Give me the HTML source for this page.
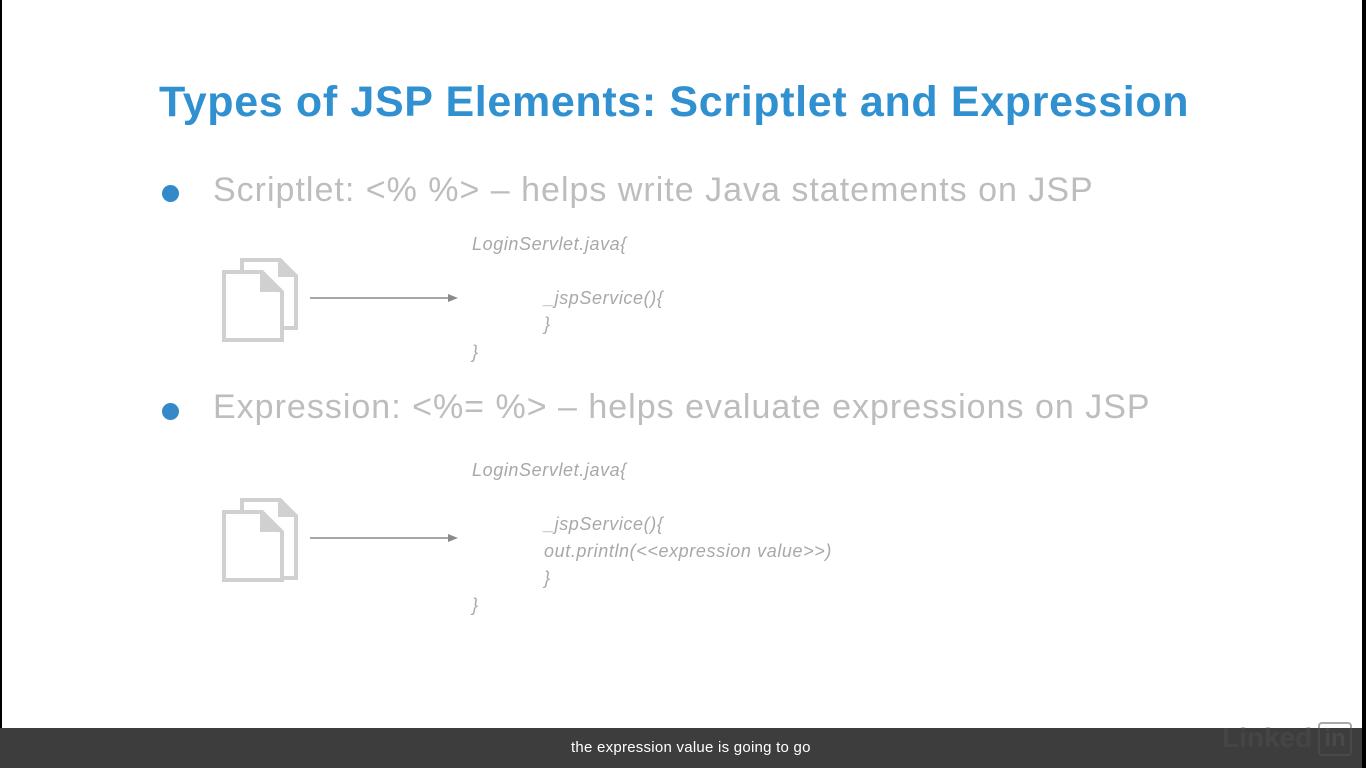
<!DOCTYPE html>
<html><head><meta charset="utf-8"><style>
*{margin:0;padding:0}
body{width:1366px;height:768px;background:#000;position:relative;overflow:hidden;font-family:"Liberation Sans",sans-serif}
#s{position:absolute;left:2px;top:0;width:1360px;height:768px;background:#fff}
.t{position:absolute;left:159px;top:78px;font-size:43px;font-weight:bold;color:#3191d0;white-space:nowrap;letter-spacing:0.65px}
.b{position:absolute;font-size:34px;color:#bdbdbd;white-space:nowrap;letter-spacing:1px}
.dot{position:absolute;width:17px;height:17px;border-radius:50%;background:#3489c9}
.c{position:absolute;font-size:18px;font-style:italic;color:#a8a8a8;white-space:nowrap;letter-spacing:0.6px}
.cap{position:absolute;left:0;top:728px;width:1362px;height:40px;background:#3d3d3d}
.cap span{position:absolute;left:571px;top:11px;color:#fff;font-size:15px;letter-spacing:0.25px}
</style></head><body>
<div id="s"></div>
<div class="t">Types of JSP Elements: Scriptlet and Expression</div>
<div class="dot" style="left:162px;top:185px"></div>
<div class="b" style="left:213px;top:171px">Scriptlet: &lt;% %&gt; – helps write Java statements on JSP</div>
<div class="dot" style="left:162px;top:403px"></div>
<div class="b" style="left:213px;top:388px">Expression: &lt;%= %&gt; – helps evaluate expressions on JSP</div>

<svg style="position:absolute;left:0;top:0" width="1366" height="768">
<g fill="none" stroke="#d0d0d0" stroke-width="4">
<path d="M242 260H280L296 276V328H242Z"/><path d="M224 272H262L282 292V340H224Z" fill="#fff"/>
<path d="M242 500H280L296 516V578H242Z"/><path d="M224 512H262L282 532V580H224Z" fill="#fff"/>
</g>
<path d="M260 273L281 292H260Z M260 513L281 532H260Z M278 261L295 277H278Z M278 501L295 517H278Z" fill="#d0d0d0"/>
<g stroke="#8a8a8a" stroke-width="1.5"><line x1="310" y1="298" x2="450" y2="298"/><line x1="310" y1="538" x2="450" y2="538"/></g>
<path d="M458 298L448 294V302Z M458 538L448 534V542Z" fill="#8a8a8a"/>
</svg>

<div class="c" style="left:472px;top:234px">LoginServlet.java{</div>
<div class="c" style="left:544px;top:288px">_jspService(){</div>
<div class="c" style="left:544px;top:314px">}</div>
<div class="c" style="left:472px;top:342px">}</div>

<div class="c" style="left:472px;top:460px">LoginServlet.java{</div>
<div class="c" style="left:544px;top:514px">_jspService(){</div>
<div class="c" style="left:544px;top:541px">out.println(&lt;&lt;expression value&gt;&gt;)</div>
<div class="c" style="left:544px;top:568px">}</div>
<div class="c" style="left:472px;top:595px">}</div>

<div class="cap"><span>the expression value is going to go</span></div>
<div style="position:absolute;left:1222px;top:722px;font-size:28px;font-weight:bold;color:#555;opacity:.35">Linked</div>
<div style="position:absolute;left:1318px;top:722px;width:30px;height:30px;border:2px solid #555;border-radius:4px;color:#555;font-size:24px;font-weight:bold;text-align:center;line-height:30px;opacity:.5">in</div>
</body></html>
